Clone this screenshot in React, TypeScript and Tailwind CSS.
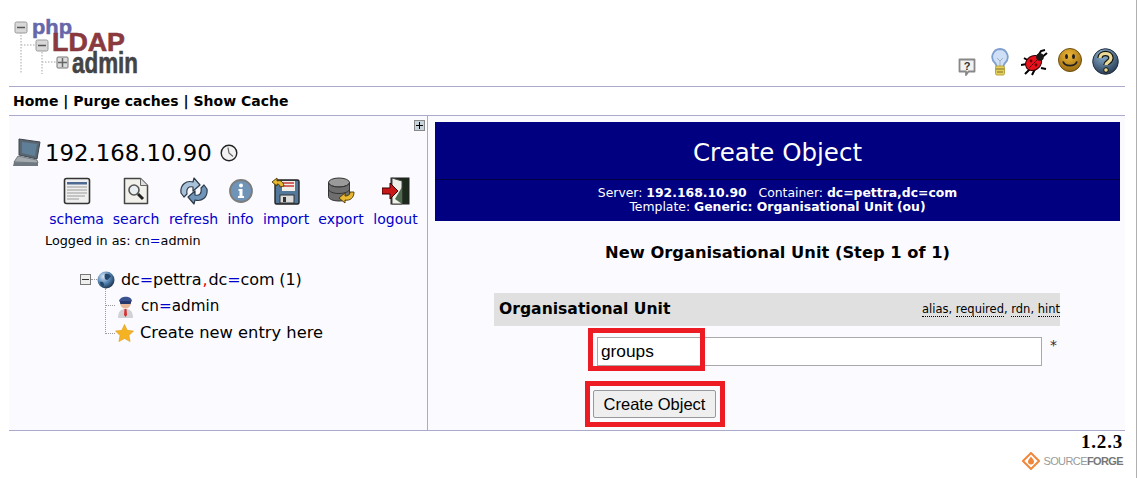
function Logo() {
  return (
    <svg width="130" height="72" viewBox="0 0 130 72" className="block overflow-visible">
      <g stroke="#c4c4c4" strokeWidth="1.500" strokeDasharray="1.500 1.500" fill="none">
        <path d="M7 24V66M7 37H22M28 44V66M28 54H43" />
      </g>
      <rect x="1" y="14" width="12" height="11" rx="1.500" fill="#d8d8d8" stroke="#999" />
      <path d="M3 19.500h8" stroke="#555" strokeWidth="1.500" />
      <rect x="22" y="32" width="12" height="11" rx="1.500" fill="#d8d8d8" stroke="#999" />
      <path d="M24 37.500h8" stroke="#555" strokeWidth="1.500" />
      <rect x="43" y="49" width="11" height="11" rx="1" fill="#ddd" stroke="#777" />
      <path d="M44 54.500h9M48.500 50v9" stroke="#666" strokeWidth="1.500" />
      <text x="18" y="26" textLength="40" lengthAdjust="spacingAndGlyphs" fontFamily="Liberation Sans" fontWeight="700" fontSize="21" fill="#6666aa" stroke="#6666aa" strokeWidth=".5">php</text>
      <text x="38" y="43" textLength="73" lengthAdjust="spacingAndGlyphs" fontFamily="Liberation Sans" fontWeight="700" fontSize="25" fill="#8a3a3f" stroke="#8a3a3f" strokeWidth=".6">LDAP</text>
      <text x="58" y="65" textLength="66" lengthAdjust="spacingAndGlyphs" fontFamily="Liberation Sans" fontWeight="700" fontSize="30" fill="#444" stroke="#444" strokeWidth=".6">admin</text>
    </svg>
  )
}

function SpeechIcon() {
  return (
    <svg width="20" height="20" viewBox="0 0 20 20">
      <path d="M2.500 2.500h15v12h-6l-2.500 3.500v-3.500h-6.500z" fill="#f2f2f2" stroke="#888" strokeWidth="1.800" strokeLinejoin="round" />
      <text x="10" y="12.500" textAnchor="middle" fontFamily="Liberation Sans" fontWeight="700" fontSize="11" fill="#333">?</text>
    </svg>
  )
}

function BulbIcon() {
  return (
    <svg width="18" height="28" viewBox="0 0 18 28">
      <path d="M9 1a8 8 0 0 0-5 14c1 1 1.500 3 1.500 4h7c0-1 .5-3 1.500-4A8 8 0 0 0 9 1z" fill="#cfe0f6" stroke="#7f9fd0" strokeWidth="1.800" />
      <path d="M6 10l3 3 3-3M9 13v6" stroke="#9fb0c0" fill="none" />
      <rect x="4.500" y="18" width="9" height="9" rx="1.500" fill="#e6cf58" stroke="#b8a43e" />
      <path d="M5 21h8M6 24h6" stroke="#7a7030" />
    </svg>
  )
}

function BugIcon() {
  return (
    <svg width="28" height="28" viewBox="0 0 28 28">
      <g stroke="#000" strokeWidth="2" fill="none">
        <path d="M17 8l3-5 4-1M20 10l6-5M3 10l5 3M0 17l6-1M4 26l6-6M11 27l3-6M20 20l5 1" />
      </g>
      <ellipse cx="12.500" cy="15" rx="8.500" ry="7" fill="#e8101c" stroke="#300" transform="rotate(-35 12.500 15)" />
      <circle cx="19" cy="9" r="3.800" fill="#1a1a1a" />
      <path d="M8 20l9-9" stroke="#500" />
      <circle cx="10" cy="13" r="1.400" fill="#600" />
      <circle cx="15" cy="17" r="1.400" fill="#600" />
    </svg>
  )
}

function SmileyIcon() {
  return (
    <svg width="24" height="25" viewBox="0 0 24 25">
      <defs>
        <radialGradient id="sm" cx="0.450" cy="0.300" r="0.750">
          <stop offset="0" stopColor="#f0b838" />
          <stop offset="1" stopColor="#95660c" />
        </radialGradient>
      </defs>
      <circle cx="12" cy="12" r="11.500" fill="url(#sm)" stroke="#6d5014" />
      <ellipse cx="8.500" cy="8.500" rx="1.500" ry="2.500" fill="#222" />
      <ellipse cx="15.500" cy="8.500" rx="1.500" ry="2.500" fill="#222" />
      <path d="M5 13.500c2 5.500 12 5.500 14 0" stroke="#222" strokeWidth="1.800" fill="none" />
    </svg>
  )
}

function HelpIcon() {
  return (
    <svg width="27" height="27" viewBox="0 0 27 27">
      <defs>
        <radialGradient id="hp" cx="0.400" cy="0.250" r="0.850">
          <stop offset="0" stopColor="#8fb6d8" />
          <stop offset="1" stopColor="#1c2e44" />
        </radialGradient>
      </defs>
      <circle cx="13.500" cy="13.500" r="12.800" fill="url(#hp)" stroke="#222f3e" />
      <path d="M8 10c0-6 11-6 11 0 0 4-5 4-5 7" fill="none" stroke="#14140c" strokeWidth="5.500" />
      <path d="M8 10c0-6 11-6 11 0 0 4-5 4-5 7" fill="none" stroke="#ead999" strokeWidth="3.200" />
      <circle cx="14" cy="22" r="2.300" fill="#ead999" stroke="#14140c" />
    </svg>
  )
}

function ComputerIcon() {
  return (
    <svg width="28" height="30" viewBox="0 0 28 30">
      <path d="M6 1l21 3-3 17-18-4z" fill="#5a6670" stroke="#3d4650" />
      <path d="M9 4l15 2-2 12-13-3z" fill="#5f7f98" />
      <path d="M5 18l19 4 1 3-24-1z" fill="#a4aaae" stroke="#5b646c" strokeWidth=".8" />
      <path d="M1 24l24 1v3L0 28z" fill="#6f7880" />
    </svg>
  )
}

function ClockIcon() {
  return (
    <svg width="18" height="18" viewBox="0 0 18 18">
      <circle cx="9" cy="9" r="7.800" fill="#f2f2f2" stroke="#222" strokeWidth="1.400" />
      <path d="M8 3.500L9 9l4 3.500" fill="none" stroke="#666" strokeWidth="1.200" />
    </svg>
  )
}

function SchemaIcon() {
  return (
    <svg width="28" height="28" viewBox="0 0 28 28">
      <rect x="1.500" y="1.500" width="25" height="25" rx="2" fill="#efefef" stroke="#333" strokeWidth="1.600" />
      <rect x="4" y="5" width="20" height="2.500" fill="#4c6a92" />
      <path d="M4 10h20M4 13h20M4 16h20M4 19h18M4 22h12" stroke="#999" />
    </svg>
  )
}

function SearchIcon() {
  return (
    <svg width="26" height="28" viewBox="0 0 26 28">
      <path d="M1.500 1.500h16l7 7v18h-23z" fill="#f2f0ea" stroke="#444" strokeWidth="1.500" strokeLinejoin="round" />
      <path d="M17.500 1.500v7h7" fill="#ddd" stroke="#666" />
      <circle cx="11" cy="13" r="5" fill="#e8edf0" stroke="#555" strokeWidth="1.600" />
      <path d="M15 17l5 5" stroke="#222" strokeWidth="3" />
    </svg>
  )
}

function RefreshIcon() {
  return (
    <svg width="28" height="28" viewBox="0 0 28 28">
      <g stroke="#2d3a4a" strokeWidth="1.200" strokeLinejoin="round">
        <path d="M1 16C0 8 6 3 13 5l1-4 6 7-7 6 0-4C9 9 6 11 7 17l-3 3z" fill="#a8c2da" />
        <path d="M27 12c1 8-5 13-12 11l-1 4-6-7 7-6 0 4c4 1 7-1 6-7l3-3z" fill="#6f94b8" />
      </g>
    </svg>
  )
}

function InfoIcon() {
  return (
    <svg width="24" height="26" viewBox="0 0 24 26">
      <circle cx="12" cy="13" r="11" fill="#7093b8" stroke="#7c7c7c" strokeWidth="1.800" />
      <circle cx="12" cy="7.500" r="2" fill="#fff" />
      <path d="M9.500 11h4v7h1.500v2h-6v-2h1.500v-5h-1z" fill="#fff" />
    </svg>
  )
}

function ImportIcon() {
  return (
    <svg width="28" height="28" viewBox="0 0 28 28">
      <rect x="3" y="3" width="24" height="24" rx="1.500" fill="#52789c" stroke="#222" strokeWidth="1.400" />
      <rect x="10" y="4" width="13" height="10" fill="#f2efe8" />
      <path d="M11 6h11M11 9h11" stroke="#c83a3a" strokeWidth="1.500" />
      <rect x="8" y="18" width="14" height="8" fill="#dcdcdc" stroke="#333" />
      <rect x="11" y="20" width="3" height="5" fill="#333" />
      <path d="M12 9C11 4 8 3 5 4V1L0 5l5 4V7c2 0 3 1 3 3z" fill="#e8b830" stroke="#4a3808" strokeWidth=".9" />
    </svg>
  )
}

function ExportIcon() {
  return (
    <svg width="28" height="28" viewBox="0 0 28 28">
      <ellipse cx="12" cy="5.500" rx="10.500" ry="4.500" fill="#9a9a9a" stroke="#333" />
      <path d="M1.500 5.500v14c0 2.500 4.500 4.500 10.500 4.500s10.500-2 10.500-4.500v-14c0 2.500-4.500 4.500-10.500 4.500S1.500 8 1.500 5.500z" fill="#6e6e6e" stroke="#333" />
      <path d="M1.500 12c0 2.500 4.500 4.500 10.500 4.500S22.500 14.500 22.500 12" fill="none" stroke="#333" />
      <path d="M27 15c0 6-4 9-9 8v3l-6-5 6-5v3c3 0 5-1 5-4z" fill="#e8b830" stroke="#4a3808" strokeWidth=".9" />
    </svg>
  )
}

function LogoutIcon() {
  return (
    <svg width="28" height="28" viewBox="0 0 28 28">
      <rect x="9" y="1" width="18" height="26" fill="#1c2a1c" stroke="#222" />
      <path d="M10 1l10 3v23H10z" fill="#eef0e8" stroke="#444" />
      <path d="M13 22l7 5V10z" fill="#4f6a4f" />
      <path d="M0 11h8V6l8 8-8 8v-5H0z" fill="#c81818" stroke="#300" />
    </svg>
  )
}

function GlobeIcon() {
  return (
    <svg width="18" height="18" viewBox="0 0 18 18">
      <defs>
        <radialGradient id="gl" cx="0.350" cy="0.300" r="0.800">
          <stop offset="0" stopColor="#d8e6f4" />
          <stop offset="0.500" stopColor="#5585b5" />
          <stop offset="1" stopColor="#0f2438" />
        </radialGradient>
      </defs>
      <circle cx="9" cy="9" r="8.500" fill="url(#gl)" />
      <path d="M8 3c3-1 6 1 6 3-2 0-2 3-4 3S7 6 8 3zM3 11c2-1 4 0 4 3l-1 2c-2-1-3-3-3-5z" fill="#24466a" />
    </svg>
  )
}

function UserIcon() {
  return (
    <svg width="17" height="23" viewBox="0 0 17 23">
      <path d="M1 23c0-7 3-9 7.500-9s7.500 2 7.500 9z" fill="#d2d2d6" />
      <path d="M7.500 14h2l.5 6-1.500 2-1.500-2z" fill="#d83030" />
      <circle cx="8.500" cy="8" r="5.500" fill="#e8b898" />
      <path d="M2 6c1-5 12-6 13 0l-1 1H3z" fill="#3a5290" />
      <rect x="3" y="6" width="11" height="3" rx="1" fill="#26386e" />
    </svg>
  )
}

function StarIcon() {
  return (
    <svg width="19" height="18" viewBox="0 0 19 18">
      <path d="M9.500 0.500l2.700 5.800 6.300.8-4.600 4.300 1.200 6.200-5.600-3.100-5.600 3.100 1.200-6.200L.5 7.100l6.300-.8z" fill="#f5b324" stroke="#e09a10" strokeWidth=".6" />
    </svg>
  )
}

function SourceForgeMark() {
  return (
    <svg width="18" height="18" viewBox="0 0 18 18">
      <path d="M9 1l8 8-8 8-8-8z" fill="none" stroke="#f0883c" strokeWidth="2" />
      <path d="M9 4.500c1 2 3 3 3 5a3 3 0 0 1-6 0c0-2 2-3 3-5z" fill="#f0883c" />
    </svg>
  )
}

const actions = [
  { label: 'schema', icon: <SchemaIcon />, w: 'w-[53px]' },
  { label: 'search', icon: <SearchIcon />, w: 'w-[46px]' },
  { label: 'refresh', icon: <RefreshIcon />, w: 'w-[49px]' },
  { label: 'info', icon: <InfoIcon />, w: 'w-[25px]' },
  { label: 'import', icon: <ImportIcon />, w: 'w-[46px]' },
  { label: 'export', icon: <ExportIcon />, w: 'w-[44px]' },
  { label: 'logout', icon: <LogoutIcon />, w: 'w-[43px] ml-[1px]' },
]

const hints = ['alias', 'required', 'rdn', 'hint']

export default function App() {
  return (
    <div className="h-[478px] w-[1137px] overflow-hidden border-r border-[#b0b0b0] bg-white font-['DejaVu_Sans',sans-serif] text-black">
      <div className="ml-[9px] w-[1116px]">
        <header className="flex h-[86px] items-start justify-between">
          <div className="ml-[5px] mt-[8px]">
            <Logo />
          </div>
          <div className="mr-[6px] mt-[48px] flex items-start gap-[11px]">
            <div className="mt-[9px]"><SpeechIcon /></div>
            <div className="ml-[3px] mr-[1px]"><BulbIcon /></div>
            <BugIcon />
            <div className="ml-[-2px] mr-[-1px]"><SmileyIcon /></div>
            <HelpIcon />
          </div>
        </header>

        <nav className="flex h-[30px] items-center border-y border-[#aaaacc] pl-[4px] text-[14px] font-bold leading-none">
          Home | Purge caches | Show Cache
        </nav>

        <div className="relative flex h-[314px] bg-[#fbfbff]">
          <aside className="w-[419px] shrink-0 border-r border-[#aaaacc]">
            <div className="flex items-center pl-[4px] pt-[22px]">
              <ComputerIcon />
              <span className="ml-[4px] text-[22.800px] leading-[30px]">192.168.10.90</span>
              <span className="ml-[8px]"><ClockIcon /></span>
            </div>

            <div className="ml-[41px] mt-[8px] flex gap-[10px]">
              {actions.map((a) => (
                <a key={a.label} href="#" className={`flex ${a.w} flex-col items-center text-[14px] leading-[17px] text-[#0000cc]`}>
                  <span className="flex h-[29px] items-center">{a.icon}</span>
                  <span className="mt-[6px] whitespace-nowrap">{a.label}</span>
                </a>
              ))}
            </div>

            <p className="ml-[36px] mt-[4px] text-[12.800px] leading-[17px]">
              Logged in as: cn<span className="text-[#0000cc]">=</span>admin
            </p>

            <ul className="ml-[71px] mt-[17px] leading-[27px]">
              <li className="flex h-[27px] items-center text-[16px]">
                <span className="flex h-[11px] w-[11px] items-center justify-center border border-[#777] bg-[#eee]">
                  <span className="h-[1px] w-[7px] bg-[#333]" />
                </span>
                <span className="w-[6px] border-t border-dotted border-[#999]" />
                <GlobeIcon />
                <span className="ml-[6px] whitespace-nowrap tracking-[-0.100px]">
                  dc<span className="text-[#0000cc]">=</span>pettra<span className="mx-[1px] text-[#ee0000]">,</span>dc<span className="text-[#0000cc]">=</span>com (1)
                </span>
              </li>
              <li className="flex h-[26px] items-center pl-[37px] text-[15.200px]">
                <span className="mr-[7px]"><UserIcon /></span>
                <span>cn<span className="text-[#0000cc]">=</span>admin</span>
              </li>
              <li className="flex h-[27px] items-center pl-[35px] text-[16.300px]">
                <span className="mr-[6px]"><StarIcon /></span>
                <span className="whitespace-nowrap">Create new entry here</span>
              </li>
            </ul>
          </aside>

          {/* tree connector drawn over the list */}
          <span className="absolute left-[96px] top-[172px] h-[46px] w-[10px] border-b border-l border-dotted border-[#999]" />
          <span className="absolute left-[96px] top-[189px] w-[10px] border-t border-dotted border-[#999]" />

          <button className="absolute left-[405px] top-[4px] flex h-[11px] w-[11px] items-center justify-center border border-[#888] bg-[#c8d4dc] p-0">
            <span className="relative block h-[7px] w-[7px]">
              <span className="absolute left-0 top-[3px] h-[1px] w-[7px] bg-black" />
              <span className="absolute left-[3px] top-0 h-[7px] w-[1px] bg-black" />
            </span>
          </button>

          <main className="flex-1 pl-[7px] pr-[5px] pt-[6px]">
            <section className="flex h-[99px] flex-col items-center bg-[#000080] text-white">
              <h1 className="flex h-[57px] items-center pt-[6px] text-[24.500px] font-normal leading-none">Create Object</h1>
              <div className="h-[1px] w-full bg-[#000040]" />
              <p className="mt-[6px] text-center text-[12.400px] leading-[14px]">
                Server: <b>192.168.10.90</b>&nbsp;&nbsp; Container: <b>dc=pettra,dc=com</b>
                <br />
                Template: <b>Generic: Organisational Unit</b> <b>(ou)</b>
              </p>
            </section>

            <h2 className="mt-[22px] text-center text-[16.300px] font-bold leading-[20px]">New Organisational Unit (Step 1 of 1)</h2>

            <div className="ml-[59px] mt-[30px] w-[566px]">
              <div className="flex h-[33px] items-center justify-between bg-[#e0e0e0] pl-[5px]">
                <span className="text-[15.600px] font-bold">Organisational Unit</span>
                <span className="text-[11.500px]">
                  {hints.map((h, i) => (
                    <span key={h}>
                      <span className="border-b border-dotted border-black">{h}</span>
                      {i < hints.length - 1 ? ', ' : ''}
                    </span>
                  ))}
                </span>
              </div>

              <div className="ml-[103px] mt-[11px] flex items-start">
                <input
                  readOnly
                  value="groups"
                  className="h-[29px] w-[445px] border border-[#a9a9a9] bg-white px-[3px] font-['Liberation_Sans',sans-serif] text-[17.300px] text-black outline-none"
                />
                <span className="ml-[8px] text-[14px] leading-[16px] text-[#442222]">*</span>
              </div>

              <button className="ml-[99px] mt-[24px] flex h-[28px] w-[123px] items-center justify-center rounded-[2px] border border-[#999] bg-[#efefef] font-['Liberation_Sans',sans-serif] text-[16.500px] text-black">
                Create Object
              </button>
            </div>
          </main>

          {/* red annotation boxes */}
          <span className="absolute left-[579px] top-[212px] h-[43px] w-[117px] border-[5px] border-[#ed1c24]" />
          <span className="absolute left-[576px] top-[265px] h-[46px] w-[140px] border-[5px] border-[#ed1c24]" />
        </div>

        <footer className="flex flex-col items-end border-t border-[#aaaacc] pr-[2px]">
          <span className="mt-[1px] font-['Liberation_Serif',serif] text-[19px] font-bold leading-[19px] tracking-[0.800px]">1.2.3</span>
          <span className="mt-[1px] flex items-center gap-[3px]">
            <SourceForgeMark />
            <span className="font-['Liberation_Sans',sans-serif] text-[11px] leading-[18px] tracking-[-0.600px] text-[#9a9a9a]">
              SOURCE<b className="text-[#777]">FORGE</b>
            </span>
          </span>
        </footer>
      </div>
    </div>
  )
}
